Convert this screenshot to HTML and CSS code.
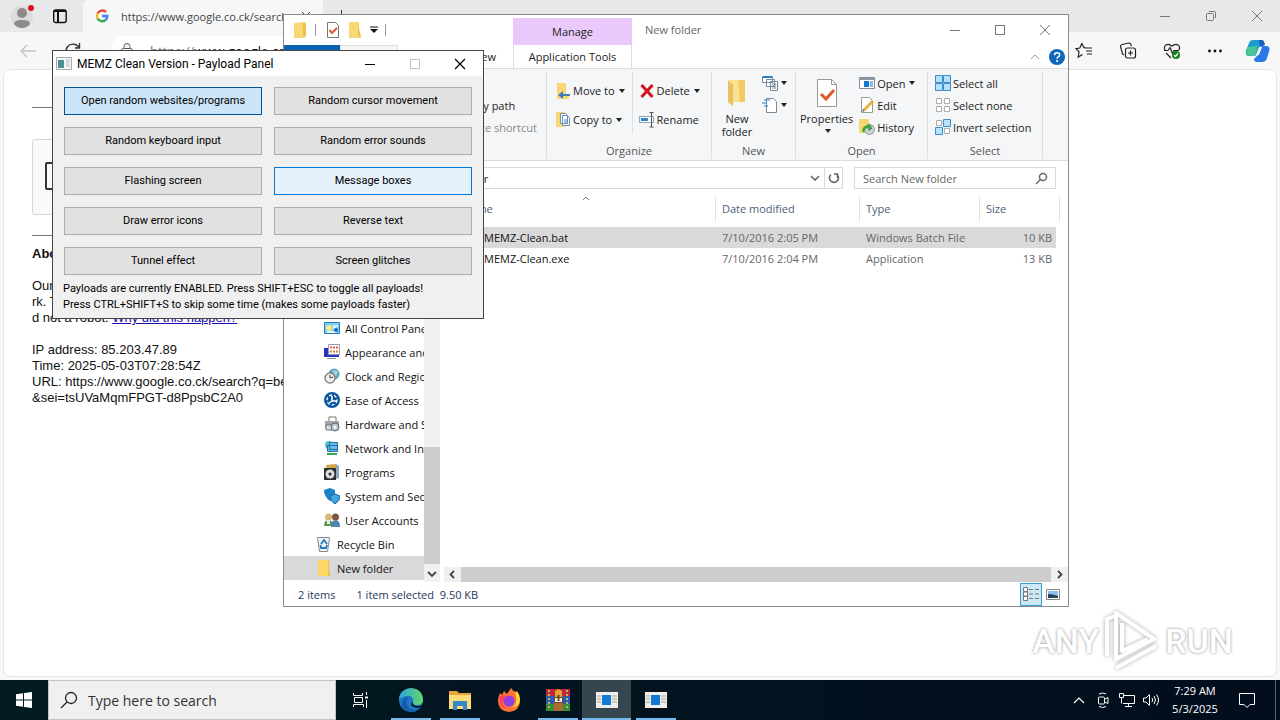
FILE: index.html
```html
<!DOCTYPE html>
<html lang="en">
<head>
<meta charset="utf-8">
<title>Desktop</title>
<link rel="stylesheet" href="styles.css">
</head>
<body>
<div class="desktop">
  <section class="edge" aria-label="Browser">
    <header class="edge-tabs">
      <div class="edge-tools">
        <svg width="26" height="26" viewBox="0 0 26 26"><circle cx="12" cy="14" r="11" fill="#dcdcdc"/><circle cx="12" cy="10" r="5" fill="#8d8a88"/><path d="M4 21q0-4 8-4t8 4q-3 4-8 4t-8-4z" fill="#8d8a88"/><circle cx="21" cy="5" r="3" fill="#d9121f"/></svg>
        <svg width="16" height="16" viewBox="0 0 16 16" fill="none" stroke="#111"><rect x="1.700" y="2" width="12.500" height="12.500" rx="2" stroke-width="1.400"/><path d="M2 3h12M6 4v10" stroke-width="2"/></svg>
      </div>
      <div class="edge-tab">
        <svg width="14" height="14" viewBox="0 0 14 14" fill="none" stroke-width="2.400"><path d="M11 3A5.300 5.300 0 0 0 2.500 4.500" stroke="#ea4335"/><path d="M2.500 4.500a5.300 5.300 0 0 0 0 5" stroke="#fbbc05"/><path d="M2.500 9.500a5.300 5.300 0 0 0 8 1.500" stroke="#34a853"/><path d="M10.500 11A5.300 5.300 0 0 0 12.300 7H7" stroke="#4285f4"/></svg>
        <span class="edge-title">https://www.google.co.ck/search</span>
        <svg width="10" height="10" viewBox="0 0 10 10" stroke="#333"><path d="M1 1l8 8M9 1l-8 8"/></svg>
      </div>
      <button class="new-tab" aria-label="New tab"><svg width="13" height="13" viewBox="0 0 13 13" stroke="#333"><path d="M6.500 0v13M0 6.500h13"/></svg></button>
      <div class="edge-controls">
        <button aria-label="Minimize browser"><svg width="12" height="12" viewBox="0 0 12 12" stroke="#777"><path d="M1 6.500h10"/></svg></button>
        <button aria-label="Restore browser"><svg width="12" height="12" viewBox="0 0 12 12" stroke="#777" fill="none"><rect x="1.500" y="3.500" width="7" height="7" rx="1"/><path d="M4 1.500h5.500a1 1 0 0 1 1 1V8"/></svg></button>
        <button aria-label="Close browser"><svg width="12" height="12" viewBox="0 0 12 12" stroke="#777"><path d="M1 1l10 10M11 1L1 11"/></svg></button>
      </div>
    </header>
    <div class="edge-bar">
      <button aria-label="Back"><svg width="16" height="14" viewBox="0 0 16 14" fill="none" stroke="#c4c4c4" stroke-width="1.300"><path d="M16 7H1M7 1L1 7l6 6"/></svg></button>
      <button aria-label="Reload"><svg width="18" height="18" viewBox="0 0 18 18" fill="none" stroke="#333" stroke-width="1.400"><path d="M15 5.500A7 7 0 1 0 16 9M15.500 1v5H11"/></svg></button>
      <div class="url"><svg width="14" height="16" viewBox="0 0 14 16" fill="none" stroke="#555"><rect x="1.500" y="5.500" width="11" height="9" rx="2"/><path d="M4 5V3.500a3 3 0 0 1 6 0V5"/></svg><span>https://<b>www.google.co.ck</b></span></div>
      <div class="edge-actions">
        <button aria-label="Favorites"><svg width="18" height="18" viewBox="0 0 18 18" fill="none" stroke="#222" stroke-width="1.200"><path d="M11.500 6L9 5.600 6.800 1.500 4.800 6 1 6.600l3 3.200L3.200 15l4.300-2.600M11 6h6M11 9h6M12 12h5"/></svg></button>
        <button aria-label="Collections"><svg width="18" height="18" viewBox="0 0 18 18" fill="none" stroke="#222" stroke-width="1.200"><rect x="6.500" y="6" width="10" height="10" rx="2"/><path d="M11.500 8.500v5M9 11h5M5 13L3.500 12 1.500 4.500q0-1.500 1.500-2l7-1.500q2 0 2.300 3"/></svg></button>
        <button aria-label="Browser essentials"><svg width="18" height="18" viewBox="0 0 18 18" fill="none" stroke="#222" stroke-width="1.200"><path d="M2 8C0 4 4 0 9 4c5-4 9 0 7 4M3 11l5 5M1 8.500h4l2-3 2.500 6L11 8.500h5"/><circle cx="13" cy="13" r="4" fill="#178217" stroke="none"/><path d="M11 13l1.500 1.500 2.500-3" stroke="#fff"/></svg></button>
        <button aria-label="Settings and more"><svg width="16" height="6" viewBox="0 0 16 6" fill="#111"><circle cx="2.500" cy="3" r="1.400"/><circle cx="8" cy="3" r="1.400"/><circle cx="13.500" cy="3" r="1.400"/></svg></button>
        <button class="copilot" aria-label="Copilot"><svg width="26" height="24" viewBox="0 0 26 24"><path d="M8 1h8q3 0 3 4l-3 1-4 9q-1 2-4 2H4q-4 0-3-5L4 4q1-3 4-3z" fill="#1a9fd0"/><path d="M2 8l10-1-1 8q-1 2-4 2H4q-4 0-2-9z" fill="#4bc494"/><path d="M17 7h4q4 0 3.500 4L22 19q-1 4-5 4h-5q-3 0-3-3l4-4 3-7z" fill="#2a79e8"/><path d="M14 1h3q2 0 3 5l-5 2z" fill="#1760c0"/><path d="M14 8h3l-3 8h-3z" fill="#f7f7f7"/></svg></button>
      </div>
    </div>
    <main class="page">
      <hr>
      <div class="captcha"><input type="checkbox" aria-label="I'm not a robot"></div>
      <hr>
      <h1>About this page</h1>
      <p>Our systems have detected unusual traffic from your computer netwo<br>rk. This page checks to see if it's really you sending the requests, an<br>d not a robot. <a href="#why">Why did this happen?</a></p>
      <p>IP address: 85.203.47.89<br>Time: 2025-05-03T07:28:54Z<br>URL: https://www.google.co.ck/search?q=best<br>&amp;sei=tsUVaMqmFPGT-d8PpsbC2A0</p>
    </main>
  </section>

  <section class="explorer" aria-label="New folder">
    <header class="ex-title">
      <div class="quick">
        <svg width="16" height="18" viewBox="0 0 16 18"><path d="M2 2l10-1 2 1v13l-2 2H2z" fill="#f8d775"/><path d="M11 1v13l3 2V3z" fill="#edc04d"/></svg>
        <i class="bar"></i>
        <svg class="sheet" width="14" height="18" viewBox="0 0 14 18"><path d="M1.500 1.500h8l3 3v12h-11z" fill="#fff" stroke="#777"/><path d="M3.500 9l2.500 3 5-5" fill="none" stroke="#d8563c" stroke-width="2"/></svg>
        <svg width="16" height="18" viewBox="0 0 16 18"><path d="M2 1h10v11l2 1v4H2z" fill="#f8d775"/><path d="M11 2v13l2 1V12z" fill="#edc04d"/></svg>
        <svg width="8" height="8" viewBox="0 0 8 8"><path d="M0 1h8" stroke="#111"/><path d="M0 3h8L4 7z" fill="#111"/></svg>
        <i class="bar"></i>
      </div>
      <div class="manage">Manage</div>
      <span class="ex-name">New folder</span>
      <div class="ex-controls">
        <button aria-label="Minimize"><svg width="12" height="12" viewBox="0 0 12 12" stroke="#777"><path d="M1 6.500h10"/></svg></button>
        <button aria-label="Maximize"><svg width="12" height="12" viewBox="0 0 12 12" stroke="#777" fill="none"><rect x="1.500" y="1.500" width="9" height="9"/></svg></button>
        <button aria-label="Close"><svg width="12" height="12" viewBox="0 0 12 12" stroke="#777"><path d="M1 1l10 10M11 1L1 11"/></svg></button>
      </div>
    </header>
    <nav class="ex-tabs">
      <button class="file">File</button><button class="home">Home</button><button class="view">View</button><button class="app">Application Tools</button>
      <div class="help"><svg width="10" height="6" viewBox="0 0 10 6" fill="none" stroke="#999"><path d="M1 5l4-4 4 4"/></svg><svg width="16" height="16" viewBox="0 0 16 16"><circle cx="8" cy="8" r="8" fill="#0f68b8"/><path d="M5.500 6.200q0-2.500 2.600-2.500t2.500 2.200q0 1.200-1.500 2-1 .6-1 1.800" fill="none" stroke="#fff" stroke-width="1.600"/><circle cx="8.100" cy="12" r="1.100" fill="#fff"/></svg></div>
    </nav>
    <div class="ribbon">
      <div class="group clip">
        <div class="cmds"><div class="stack"><button>Copy path</button><button disabled>Paste shortcut</button></div></div>
      </div>
      <div class="group organize">
        <div class="cmds">
          <div class="stack wide">
            <button><svg width="16" height="18" viewBox="0 0 16 18"><path d="M2 1h9v11l3 1v4H2z" fill="#f8d775"/><path d="M15 12H8V9l-5 4 5 4v-3h7z" fill="#3f80b8"/></svg>Move to<i class="caret"></i></button>
            <button><svg width="16" height="18" viewBox="0 0 16 18"><path d="M1 1h9v15H1z" fill="#f8d775"/><path d="M5.500 2.500h5l2 2v8h-7zM7.500 4.500h5l2 2v8h-7z" fill="#fff" stroke="#6a8fb0"/><path d="M9 9h4M9 11h4" stroke="#4c88bc"/></svg>Copy to<i class="caret"></i></button>
          </div>
          <div class="stack wide edged">
            <button><svg width="16" height="16" viewBox="0 0 16 16" stroke="#d3141f" stroke-width="3"><path d="M2.500 2l11 12M13.500 2l-11 12"/></svg>Delete<i class="caret"></i></button>
            <button><svg width="16" height="16" viewBox="0 0 16 16" fill="none"><rect x=".5" y="4.500" width="14" height="6" fill="#fff" stroke="#8ab"/><path d="M2 6h7v3H2z" fill="#3585c5"/><path d="M12.500 1v14M10.500.5h4M10.500 15h4" stroke="#555"/></svg>Rename</button>
          </div>
        </div>
        <span class="label">Organize</span>
      </div>
      <div class="group new">
        <div class="cmds">
          <button class="big"><svg width="24" height="30" viewBox="0 0 24 30"><path d="M3 2h17v22H9l-1 4-5-4z" fill="#fae091"/><path d="M13 2h7v22h-5z" fill="#f2ca60"/><path d="M3 3l5 3v22l-5-4z" fill="#e9c061"/></svg><span>New<br>folder</span></button>
          <div class="stack mini">
            <button aria-label="New item"><svg width="17" height="16" viewBox="0 0 17 16" fill="#fff" stroke="#789"><path d="M.5 1.500h10v6H.5zM4.500 4.500h8v7h-8zM8.500 6.500h7v9h-7z"/><path d="M1 2h9" stroke="#2e83c4" stroke-width="2"/><path d="M10 9h4M10 11h4M10 13h4"/></svg><i class="caret"></i></button>
            <button aria-label="Easy access"><svg width="17" height="16" viewBox="0 0 17 16" fill="#fff" stroke="#789"><path d="M4.500 1.500h7l3 3v11h-10z"/><path d="M2 3h6M0 6h5M2 9h4" stroke="#2e83c4"/></svg><i class="caret"></i></button>
          </div>
        </div>
        <span class="label">New</span>
      </div>
      <div class="group open">
        <div class="cmds">
          <button class="big"><svg width="22" height="30" viewBox="0 0 22 30"><path d="M1.500 1.500h14l5 5v22h-19z" fill="#fff" stroke="#999"/><path d="M15.500 1.500v5h5" fill="none" stroke="#999"/><path d="M5 16l5 5 8-9" fill="none" stroke="#df5a2b" stroke-width="3"/></svg>Properties<i class="caret"></i></button>
          <div class="stack">
            <button><svg width="16" height="14" viewBox="0 0 16 14"><path d="M.5 1.500h15v11H.5z" fill="#fff" stroke="#889"/><path d="M1 3h14" stroke="#89a" stroke-width="2"/><path d="M5 5h5v6H5z" fill="#137bd1"/><path d="M11 6h3M11 8h3M11 10h3" stroke="#137bd1"/></svg>Open<i class="caret"></i></button>
            <button><svg width="16" height="16" viewBox="0 0 16 16"><path d="M2.500.5h8l3 3v12h-11z" fill="#fff" stroke="#999"/><path d="M5 13l9-9" stroke="#e5b33a" stroke-width="3"/><path d="M3 15l1-3 2 2z" fill="#666"/></svg>Edit</button>
            <button><svg width="16" height="16" viewBox="0 0 16 16"><path d="M0 0h10v14H0z" fill="#f8d775"/><circle cx="10.500" cy="10.500" r="5" fill="#c9d3d3" stroke="#899"/><path d="M3 12q1-6 6-6V4l4 4-4 4V9q-3 0-4 5z" fill="#3ea643"/><path d="M10 11l3-2" stroke="#555"/></svg>History</button>
          </div>
        </div>
        <span class="label">Open</span>
      </div>
      <div class="group select">
        <div class="cmds">
          <div class="stack">
            <button><svg width="16" height="16" viewBox="0 0 16 16" fill="#b7e0fb" stroke="#3b8dcb"><path d="M.5.500h7v7H.5zM8.500.5h7v7h-7zM.5 8.500h7v7H.5zM8.500 8.500h7v7h-7z"/></svg>Select all</button>
            <button><svg width="16" height="16" viewBox="0 0 16 16" fill="#fff" stroke="#aaa"><path d="M1.500 1.500h5v5h-5zM9.500 1.500h5v5h-5zM1.500 9.500h5v5h-5zM9.500 9.500h5v5h-5z"/></svg>Select none</button>
            <button><svg width="16" height="16" viewBox="0 0 16 16"><path d="M1.500 1.500h5v5h-5zM9.500 9.500h5v5h-5z" fill="#fff" stroke="#aaa"/><path d="M8.500.5h7v7h-7zM.5 8.500h7v7h-7z" fill="#b7e0fb" stroke="#3b8dcb"/></svg>Invert selection</button>
          </div>
        </div>
        <span class="label">Select</span>
      </div>
    </div>
    <div class="address">
      <div class="path"><span>New folder</span>
        <button aria-label="Previous locations"><svg width="10" height="8" viewBox="0 0 10 8" fill="none" stroke="#666" stroke-width="1.600"><path d="M1 2l4 4 4-4"/></svg></button>
        <button class="refresh" aria-label="Refresh"><svg width="12" height="12" viewBox="0 0 12 12" fill="none" stroke="#666" stroke-width="1.600"><path d="M3 2.500a4.500 4.500 0 1 0 6 0M9.500 6V2H6"/></svg></button>
      </div>
      <label class="search"><input type="text" aria-label="Search New folder" placeholder="Search New folder"><svg width="13" height="13" viewBox="0 0 13 13" fill="none" stroke="#666" stroke-width="1.500"><circle cx="8" cy="5" r="3.500"/><path d="M5.500 7.500L1 12"/></svg></label>
    </div>
    <div class="ex-body">
      <aside class="tree">
        <ul>
          <li><svg width="16" height="16" viewBox="0 0 16 16"><path d="M.5 2.500h15v11H.5z" fill="#7bd0f5" stroke="#2580b8"/><circle cx="5" cy="8" r="3" fill="#f5e884"/><path d="M9 6h5M9 8h3M3 12h9" stroke="#fff" stroke-width="1.500"/><circle cx="12" cy="10" r="2" fill="#1b69b5"/></svg>All Control Panel Items</li>
          <li><svg width="16" height="16" viewBox="0 0 16 16"><path d="M0 4h12v9H0z" fill="#2b32c8"/><path d="M4.500.5h11v10h-11z" fill="#fff" stroke="#99a"/><path d="M6 3.500h8" stroke="#e55" stroke-width="2" stroke-dasharray="2 1"/><path d="M6 7.500h8" stroke="#d58030" stroke-width="2" stroke-dasharray="2 1"/><path d="M12 11h3v2h-3z" fill="#2b32c8"/><path d="M3 14.500h9" stroke="#999"/></svg>Appearance and Personalization</li>
          <li><svg width="16" height="16" viewBox="0 0 16 16"><circle cx="10" cy="6" r="5.500" fill="#57a4b8"/><path d="M8 2l6 1-2 6z" fill="#a8d5dd"/><circle cx="6" cy="10" r="5" fill="#eee" stroke="#888" stroke-width="1.500"/><path d="M6 7v3l3-1" fill="none" stroke="#444"/></svg>Clock and Region</li>
          <li><svg width="16" height="16" viewBox="0 0 16 16"><circle cx="8" cy="8" r="8" fill="#0c559f"/><circle cx="8" cy="8" r="5" fill="none" stroke="#fff" stroke-width="1.300" stroke-dasharray="3 2"/><path d="M8 4v5h5M8 9l-3 2" stroke="#fff" stroke-width="1.500" fill="none"/></svg>Ease of Access</li>
          <li><svg width="16" height="16" viewBox="0 0 16 16"><path d="M5 1h7v5H5z" fill="#fff" stroke="#777"/><path d="M1 5h14v7H1z" fill="#9fa5aa"/><path d="M2 9h6v5H2z" fill="#ddd" stroke="#777"/><circle cx="11" cy="11" r="4" fill="#b8c4ce" stroke="#667"/><circle cx="11" cy="11" r="1.500" fill="#fff"/></svg>Hardware and Sound</li>
          <li><svg width="16" height="16" viewBox="0 0 16 16"><circle cx="5" cy="5" r="4" fill="#58b9c9"/><path d="M5.500 2.500h8v7h-8zM3.500 5.500h10v6h-10z" fill="#66bfee" stroke="#1f6d9f"/><path d="M3 14h10" stroke="#37a852" stroke-width="2"/></svg>Network and Internet</li>
          <li><svg width="16" height="16" viewBox="0 0 16 16"><path d="M2 1l10-1v14l-8 1z" fill="#d6a54b"/><path d="M12 0l3 2v12l-3 1z" fill="#8aa8bd"/><path d="M0 4h12v12H0z" fill="#292f34"/><circle cx="6" cy="10" r="4.500" fill="#ddd"/><circle cx="6" cy="10" r="1.500" fill="#222"/></svg>Programs</li>
          <li><svg width="16" height="16" viewBox="0 0 16 16"><path d="M0 2l6-2 5 2q1 7-5 11Q0 9 0 2z" fill="#1a83c7"/><path d="M6 8l5-2 5 2q0 5-5 8-5-3-5-8z" fill="#44a6de" stroke="#1767a5"/></svg>System and Security</li>
          <li><svg width="16" height="16" viewBox="0 0 16 16"><circle cx="4.500" cy="5" r="3.500" fill="#d8b877"/><path d="M0 14q0-6 4.500-6T9 14z" fill="#5b994e"/><circle cx="11.500" cy="5" r="3.500" fill="#80573d"/><path d="M7 15q0-7 4.500-7T16 15z" fill="#4e85ae"/><path d="M3 8h3v4H3z" fill="#eee"/></svg>User Accounts</li>
          <li class="outer"><svg width="16" height="16" viewBox="0 0 16 16"><path d="M1.500 1.500h12l-2 14h-8z" fill="#edf4f8" stroke="#889"/><path d="M5 8l3-4 3 4M11 9l-1 3H5L4.500 9" fill="none" stroke="#2678bb" stroke-width="1.800"/></svg>Recycle Bin</li>
          <li class="outer current"><svg width="16" height="16" viewBox="0 0 16 16"><path d="M2 0h11v11l1 1v4H2z" fill="#fcd966"/><path d="M12 1v15h2v-4l-1-1V1z" fill="#edc04d"/></svg>New folder</li>
        </ul>
        <div class="vscroll"><div class="vthumb"></div><svg width="15" height="18" viewBox="0 0 15 18" fill="none" stroke="#444" stroke-width="1.800"><path d="M4 8l4 4 4-4"/></svg></div>
      </aside>
      <div class="files">
        <table>
          <colgroup><col class="c-name"><col class="c-date"><col class="c-type"><col class="c-size"></colgroup>
          <thead><tr><th>Name<svg class="sort" width="8" height="5" viewBox="0 0 8 5" fill="none" stroke="#777"><path d="M1 4l3-3 3 3"/></svg></th><th>Date modified</th><th>Type</th><th>Size</th></tr></thead>
          <tbody>
            <tr class="picked"><td>MEMZ-Clean.bat</td><td>7/10/2016 2:05 PM</td><td>Windows Batch File</td><td>10 KB</td></tr>
            <tr><td>MEMZ-Clean.exe</td><td>7/10/2016 2:04 PM</td><td>Application</td><td>13 KB</td></tr>
          </tbody>
        </table>
        <div class="hscroll"><svg width="17" height="15" viewBox="0 0 17 15" fill="none" stroke="#444" stroke-width="1.800"><path d="M10 4L6.500 7.500 10 11"/></svg><div class="hthumb"></div><svg width="17" height="15" viewBox="0 0 17 15" fill="none" stroke="#444" stroke-width="1.800"><path d="M7 4l3.500 3.500L7 11"/></svg></div>
      </div>
    </div>
    <footer class="status"><span>2 items</span><span>1 item selected&nbsp; 9.50 KB</span>
      <div class="modes">
        <button class="on" aria-label="Details view"><svg width="16" height="14" viewBox="0 0 16 14" fill="#fff" stroke="#777"><path d="M.5.500h4v4h-4zM.5 5h4v4h-4zM.5 9.500h4v4h-4zM6 2.500h4M6 7h4M6 11.500h4M12 2.500h4M12 7h4M12 11.500h4"/></svg></button>
        <button aria-label="Thumbnails"><svg width="14" height="11" viewBox="0 0 14 11"><path d="M.5.500h13v10H.5z" fill="#fff" stroke="#888"/><path d="M2 2h10v7H2z" fill="#8fc0ee"/><path d="M2 5q5 0 10 2v2H2z" fill="#25465b"/></svg></button>
      </div>
    </footer>
  </section>

  <section class="dialog" role="dialog" aria-label="MEMZ Clean Version - Payload Panel">
    <header class="dlg-title">
      <svg width="16" height="14" viewBox="0 0 16 14"><path d="M.5.500h15v12H.5z" fill="#f5f5f5" stroke="#aaa"/><path d="M2 3h6v8H2z" fill="#4b9290"/><path d="M10 3h4M10 5h4M10 7h3M10 9h4" stroke="#bbb"/></svg>
      <span>MEMZ Clean Version - Payload Panel</span>
      <div class="dlg-controls">
        <button aria-label="Minimize panel"><svg width="12" height="12" viewBox="0 0 12 12" stroke="#000"><path d="M1 6.500h10"/></svg></button>
        <button aria-label="Maximize panel" disabled><svg width="12" height="12" viewBox="0 0 12 12" stroke="#c4c4c4" fill="none"><rect x="1.500" y="1.500" width="9" height="9"/></svg></button>
        <button aria-label="Close panel"><svg width="12" height="12" viewBox="0 0 12 12" stroke="#000" stroke-width="1.200"><path d="M1 1l10 10M11 1L1 11"/></svg></button>
      </div>
    </header>
    <div class="payloads">
      <button class="active">Open random websites/programs</button><button>Random cursor movement</button>
      <button>Random keyboard input</button><button>Random error sounds</button>
      <button>Flashing screen</button><button class="hover">Message boxes</button>
      <button>Draw error icons</button><button>Reverse text</button>
      <button>Tunnel effect</button><button>Screen glitches</button>
    </div>
    <p>Payloads are currently ENABLED. Press SHIFT+ESC to toggle all payloads!<br>Press CTRL+SHIFT+S to skip some time (makes some payloads faster)</p>
  </section>

  <div class="watermark"><span>ANY</span><svg width="58" height="62" viewBox="0 0 58 62" fill="none" stroke="#fff" stroke-width="4" stroke-linejoin="round"><path d="M4 46V9l8-3M13 3v46l38-20zM19 13v28l26-12M13 58l40-22"/></svg><span>RUN</span></div>

  <footer class="taskbar">
    <button class="start" aria-label="Start"><svg width="16" height="16" viewBox="0 0 16 16" fill="#fff"><path d="M0 2.200L7 1.200V7.500H0zM8 1l8-1v7.500H8zM0 8.500h7v6.300l-7-1zM8 8.500h8V16l-8-1z"/></svg></button>
    <label class="finder"><svg width="18" height="18" viewBox="0 0 18 18" fill="none" stroke="#222" stroke-width="1.300"><circle cx="11" cy="7" r="5.500"/><path d="M7 11l-6 6"/></svg><input type="text" aria-label="Search" placeholder="Type here to search"></label>
    <button class="task overview" aria-label="Task view"><svg width="16" height="16" viewBox="0 0 16 16" fill="none" stroke="#fff"><path d="M.5 1v2.500h9V1M1.500 5.500h8v5h-8zM.5 15v-2.500h10V15M13.500 0v3M13.500 8v8"/><path d="M12 4.500h3v2h-3z" fill="#fff" stroke="none"/></svg></button>
    <button class="task run" aria-label="Edge"><svg width="26" height="26" viewBox="0 0 26 26"><defs><linearGradient id="eg" x2="1"><stop stop-color="#2aa8dd"/><stop offset="1" stop-color="#65d46c"/></linearGradient></defs><circle cx="13" cy="13" r="12" fill="#1c79c9"/><path d="M1 13C1-2 25-3 25 13q0 5-6 5-5 0-4-3c1-3-1-6-5-6-5 0-8 2-9 4z" fill="url(#eg)"/><path d="M11 10q-5 5 0 11 5 4 11 0-4 5-10 4Q3 22 4 16q1-5 7-6z" fill="#155ba5"/><path d="M15 15q-1 4 5 4 4 0 5-2l-1 3q-7 2-10-1-2-2 1-4z" fill="#07121c"/></svg></button>
    <button class="task run" aria-label="File Explorer"><svg width="24" height="22" viewBox="0 0 24 22"><path d="M1 2h8l2 2h12v16H1z" fill="#e8a33b"/><path d="M1 6h22v14H1z" fill="#fbdc78"/><path d="M5 12h14v9h-4v-4H9v4H5z" fill="#3588c8"/></svg></button>
    <button class="task" aria-label="Firefox"><svg width="24" height="24" viewBox="0 0 24 24"><path d="M3 5l2 2 2-4 3 3 4-6q2 3 4 4l1-1q4 5 4 10 0 10-11 11Q1 23 1 13q0-4 2-8z" fill="#ff7137"/><path d="M14 0q4 3 5 8 2 8-5 12 9-1 9-9 0-4-3-8l-1 2z" fill="#ffd43b"/><circle cx="12" cy="13" r="5.500" fill="#8c42e3"/><path d="M3 8q4-2 8 1-4 0-4 3-4 5 3 8-9 0-7-12z" fill="#ff3f5b"/></svg></button>
    <button class="task run" aria-label="WinRAR"><svg width="26" height="24" viewBox="0 0 26 24"><path d="M1 1h24v7H1z" fill="#bd263d"/><path d="M1 8h24v8H1z" fill="#2d5daf"/><path d="M1 16h24v7H1z" fill="#348d39"/><path d="M4 2v20M22 2v20" stroke="#c9b25e" stroke-width="2" stroke-dasharray="2 2"/><path d="M9 15h9v8H9z" fill="#ac6930"/><path d="M10 3l3-2 4 2v6h-7z" fill="#e8a42f"/><path d="M9.500 9.500h8v5h-8z" fill="#eee" stroke="#6d421f"/><path d="M13.500 7v6" stroke="#6d421f" stroke-width="2"/></svg></button>
    <button class="task run focus" aria-label="MEMZ panel"><svg width="22" height="16" viewBox="0 0 22 16"><path d="M0 0h22v16H0z" fill="#eee"/><path d="M1 4h4M1 7h4M1 10h4M16 4h5M16 7h5M16 10h5" stroke="#b59b83"/><path d="M6 3h9v10H6z" fill="#127ad4"/></svg></button>
    <button class="task run" aria-label="MEMZ"><svg width="22" height="16" viewBox="0 0 22 16"><path d="M0 0h22v16H0z" fill="#eee"/><path d="M1 4h4M1 7h4M1 10h4M16 4h5M16 7h5M16 10h5" stroke="#b59b83"/><path d="M6 3h9v10H6z" fill="#127ad4"/></svg></button>
    <div class="tray">
      <svg width="24" height="8" viewBox="-6 0 24 8" fill="none" stroke="#fff" stroke-width="1.200"><path d="M1 7l5-5 5 5"/></svg>
      <svg width="24" height="16" viewBox="-5 0 24 16" fill="none" stroke="#fff"><rect x="2.500" y="5" width="6" height="7" rx="1"/><path d="M9 7l3-1.500v6L9 10M3 2q4-2 7 0M3 14.500q4 2 7 0"/></svg>
      <svg width="24" height="16" viewBox="-3 0 24 16" fill="none" stroke="#fff"><path d="M5 3.500h11.500v8H5M10.500 12v2.500M7 14.500h7M1.500 1.500h4v4h-4zM3.500 5.500v6"/></svg>
      <svg width="24" height="16" viewBox="-3 0 24 16" fill="none" stroke="#fff"><path d="M1.500 6v4H4l3.500 3.500v-11L4 6zM10 6q1.500 2 0 4M12 4q3 4 0 8M14.500 2.500q4 5.500 0 11"/></svg>
    </div>
    <div class="clock"><time>7:29 AM</time><time>5/3/2025</time></div>
    <button class="notify" aria-label="Notifications"><svg width="18" height="18" viewBox="0 0 18 18" fill="none" stroke="#fff"><path d="M1.500 2.500h15v11H12l-3 3-3-3H1.500z"/></svg></button>
    <button class="peek" aria-label="Show desktop"></button>
  </footer>
</div>
</body>
</html>
```
FILE: styles.css
```css
* { box-sizing: border-box; }
body { margin: 0; font-family: "Open Sans", "Noto Sans", sans-serif; font-size: 11px; color: #222; }
button { font: inherit; color: inherit; background: none; border: 0; padding: 0; margin: 0; }
input { font: inherit; }
svg { display: block; flex: none; }
.desktop { position: relative; height: 100vh; display: flex; flex-direction: column; overflow: hidden; background: #e9eef5; }

/* Browser */
.edge { flex: 1; min-height: 0; display: flex; flex-direction: column; background: #f7f7f7; padding: 0 3px 3px; }
.edge-tabs { height: 32px; margin: 0 -3px; display: flex; align-items: center; background: #e8e8e8; }
.edge-tools { width: 83px; display: flex; align-items: center; gap: 16px; padding-left: 10px; }
.edge-tab { width: 240px; height: 32px; display: flex; align-items: center; gap: 12px; padding: 0 12px; background: #f7f7f7; border-radius: 6px 0 0 0; color: #444; }
.edge-title { flex: 1; overflow: hidden; white-space: nowrap; }
.new-tab { padding-left: 12px; }
.edge-controls { margin-left: auto; display: flex; }
.edge-controls button { width: 46px; display: grid; place-items: center; }
.edge-bar { height: 37px; display: flex; align-items: center; gap: 28px; padding: 0 6px 0 17px; }
.url { flex: 1; height: 30px; padding: 0 10px; display: flex; align-items: center; gap: 16px; background: #fff; border-radius: 15px; color: #777; font-size: 13px; }
.url b { font-weight: normal; color: #111; }
.edge-actions { display: flex; align-items: center; gap: 26px; }
.copilot { margin-left: -4px; }
.page { flex: 1; min-height: 0; overflow: hidden; padding: 37px 28px 0; background: #fff; border: 1px solid #e5e5e5; border-radius: 8px; font: 13px/16px "Liberation Sans", Arial, sans-serif; color: #111; }
.page hr { width: 400px; margin: 0; border: 0; border-top: 1px solid #777; }
.captcha { width: 304px; height: 76px; margin: 31px 0 20px; padding: 22px 12px; background: #fafafa; border: 1px solid #d5d5d5; border-radius: 3px; }
.captcha input { appearance: none; width: 28px; height: 28px; margin: 0; border: 2px solid #333; border-radius: 2px; }
.page h1 { font-size: 13px; margin: 10px 0 16px; }
.page p { margin: 0 0 16px; }
.page a { color: #1a0dab; }

/* File explorer */
.explorer { position: absolute; left: 283px; top: 14px; width: 786px; height: 593px; display: flex; flex-direction: column; background: #fff; border: 1px solid #8a8a8a; }
.ex-title { height: 30px; display: flex; }
.quick { width: 229px; display: flex; align-items: center; gap: 7px; padding-left: 8px; }
.sheet { margin-left: 3px; }
.bar { width: 1px; height: 12px; background: #999; }
.manage { width: 119px; margin-top: 3px; background: #e9c9fb; text-align: center; line-height: 28px; }
.ex-name { padding-left: 13px; line-height: 30px; color: #666; }
.ex-controls { margin-left: auto; display: flex; align-items: center; padding-right: 1px; }
.ex-controls button, .dlg-controls button { width: 45px; display: grid; place-items: center; }
.dlg-controls { padding-right: 1px; }
.ex-tabs { height: 24px; display: flex; border-bottom: 1px solid #ddd; }
.file { width: 56px; background: #0a63b1; color: #fff; }
.home { width: 58px; border: 1px solid #ddd; border-bottom: 0; background: #f5f6f7; }
.view { width: 115px; text-align: right; padding-right: 17px; }
.app { width: 119px; border-left: 1px solid #e3d5eb; border-right: 1px solid #e3d5eb; }
.help { margin-left: auto; display: flex; align-items: center; gap: 9px; padding-right: 3px; }
.ribbon { height: 92px; display: flex; background: #f5f6f7; border-bottom: 1px solid #ddd; }
.group { margin: 3px 0 1px; border-right: 1px solid #dedfe0; display: flex; flex-direction: column; justify-content: space-between; }
.cmds { display: flex; }
.label { text-align: center; line-height: 17px; color: #555; }
.stack { display: flex; flex-direction: column; align-items: flex-start; }
.stack button { height: 22px; display: flex; align-items: center; gap: 2px; white-space: nowrap; }
.wide { padding-top: 4px; }
.wide button { height: 29px; }
.caret { border: 3px solid transparent; border-top: 4px solid #222; border-bottom: 0; margin-left: 2px; }
.mini .caret { margin-left: 0; }
.clip { width: 263px; }
.clip .cmds { padding: 22px 0 0 179px; }
.clip button:disabled { color: #888; }
.organize { width: 165px; }
.organize .cmds { padding-left: 8px; }
.edged { border-left: 1px solid #dedfe0; margin-left: 7px; padding-left: 6px; }
.new { width: 84px; }
.big { display: flex; flex-direction: column; align-items: center; line-height: 13px; padding-top: 6px; gap: 4px; }
.new .big { width: 50px; }
.open { width: 132px; }
.open .cmds { gap: 6px; padding-left: 4px; }
.select { width: 115px; }
.select .cmds { padding-left: 7px; }
.address { height: 35px; display: flex; gap: 11px; padding: 6px 12px 7px 0; }
.path { flex: 1; display: flex; align-items: center; border: 1px solid #d9d9d9; padding-left: 147px; }
.path span { flex: 1; }
.path button { height: 100%; width: 18px; display: grid; place-items: center; }
.path .refresh { border-left: 1px solid #d9d9d9; }
.search { width: 202px; display: flex; align-items: center; border: 1px solid #d9d9d9; padding: 0 7px 0 8px; }
.search input { flex: 1; min-width: 0; border: 0; padding: 0; background: none; }
.search input::placeholder { color: #666; opacity: 1; }
.ex-body { flex: 1; min-height: 0; display: flex; }
.tree { width: 156px; display: flex; }
.tree ul { flex: 1; min-width: 0; margin: 0; padding: 0 0 2px; list-style: none; display: flex; flex-direction: column; justify-content: flex-end; overflow: hidden; color: #111; }
.tree li { height: 24px; flex: none; display: flex; align-items: center; gap: 5px; padding-left: 40px; white-space: nowrap; overflow: hidden; }
.tree .outer { padding-left: 32px; }
.tree .current { background: #d9d9d9; }
.vscroll { width: 16px; display: flex; flex-direction: column; justify-content: flex-end; background: #f0f0f0; }
.vthumb { height: 117px; background: #cdcdcd; }
.files { flex: 1; min-width: 0; display: flex; flex-direction: column; justify-content: space-between; padding-left: 4px; }
table { width: 616px; table-layout: fixed; border-collapse: collapse; color: #666; }
.c-name { width: 272px; }
.c-date { width: 144px; }
.c-type { width: 120px; }
.c-size { width: 80px; }
th, td { white-space: nowrap; }
th { height: 31px; padding: 0 6px 6px; font-weight: normal; text-align: left; color: #4c607a; position: relative; background: linear-gradient(#e5e5e5, #e5e5e5) right top / 1px 26px no-repeat; }
th:first-child { padding-left: 18px; }
.sort { position: absolute; left: 138px; top: 0; }
td { height: 21px; padding: 0 6px; }
td:first-child { color: #111; padding-left: 40px; }
td:last-child { text-align: right; padding-right: 8px; }
.picked { background: linear-gradient(#d9d9d9, #d9d9d9) left / 612px 100% no-repeat; }
.hscroll { display: flex; background: #f0f0f0; }
.hthumb { flex: 1; background: #cdcdcd; }
.status { height: 24px; display: flex; align-items: center; gap: 21px; padding-left: 14px; color: #1e395b; }
.modes { margin-left: auto; display: flex; padding-right: 4px; }
.modes button { width: 22px; height: 23px; display: grid; place-items: center; }
.modes .on { background: #cbe8f8; border: 1px solid #3ba0d0; }

/* Payload panel */
.dialog { position: absolute; left: 52px; top: 50px; width: 432px; height: 269px; background: #f0f0f0; border: 1px solid #444; font: 11px/16px Roboto, "Liberation Sans", sans-serif; color: #000; }
.dlg-title { height: 25px; display: flex; align-items: center; gap: 5px; padding-left: 3px; background: #fff; font: 12px Roboto, "Open Sans", sans-serif; }
.dlg-controls { margin-left: auto; display: flex; }
.payloads { display: grid; grid-template-columns: 1fr 1fr; gap: 12px; padding: 11px 11px 6px; }
.payloads button { height: 28px; background: #e1e1e1; border: 1px solid #adadad; }
.payloads .active { background: #cce4f7; border-color: #00549b; }
.payloads .hover { background: #e5f1fb; border-color: #0078d7; }
.dialog p { margin: 0; padding-left: 10px; white-space: nowrap; }

.watermark { position: absolute; right: 47px; bottom: 48px; display: flex; align-items: center; gap: 4px; font: 500 34px Roboto, "Liberation Sans", sans-serif; color: #fff; text-shadow: 0 0 3px #888; }
.watermark svg { filter: drop-shadow(0 0 2px #aaa); }

/* Taskbar */
.taskbar { height: 40px; display: flex; background: #02131b linear-gradient(90deg, #021a22, #030d1c); color: #fff; }
.start { width: 48px; display: grid; place-items: center; }
.finder { width: 288px; display: flex; align-items: center; gap: 10px; padding: 0 11px; background: #f0f0f0; border: 1px solid #c4c4c4; }
.finder input { flex: 1; min-width: 0; padding: 0; border: 0; background: none; font-size: 14px; }
.finder input::placeholder { color: #333; opacity: 1; }
.task { width: 49px; display: grid; place-items: center; }
.overview { width: 50px; }
.run { background: linear-gradient(#76b9ed, #76b9ed) bottom / 40px 2px no-repeat; }
.focus { background-color: #35464e; background-size: 100% 2px; }
.tray { margin-left: auto; display: flex; align-items: center; padding-right: 5px; }
.clock { width: 54px; display: flex; flex-direction: column; align-items: center; justify-content: center; line-height: 18px; }
.notify { width: 50px; display: grid; place-items: center; }
.peek { width: 5px; margin-left: 3px; border-left: 1px solid #566; }
```
